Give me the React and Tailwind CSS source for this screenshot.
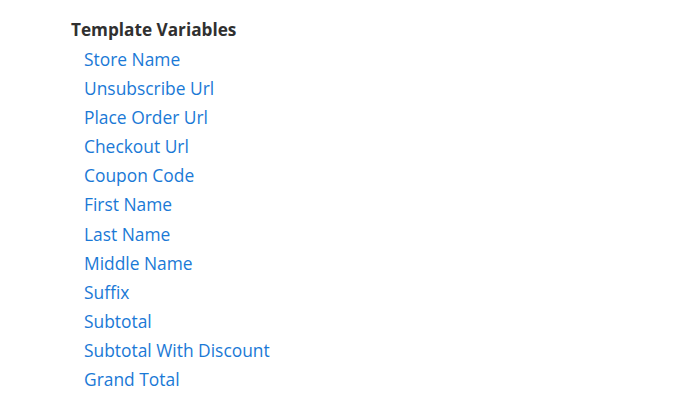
import React from "react";

const variables = [
    "Store Name",
    "Unsubscribe Url",
    "Place Order Url",
    "Checkout Url",
    "Coupon Code",
    "First Name",
    "Last Name",
    "Middle Name",
    "Suffix",
    "Subtotal",
    "Subtotal With Discount",
    "Grand Total",
];

export default function App() {
    return (
        <div className="w-[676px] h-[416px] bg-white pl-[71px] pt-[19px] font-['Open_Sans',sans-serif]">
            <h3 className="text-[17.2px] font-bold text-[#303030] leading-[22px]">Template Variables</h3>

            {/* variable list */}
            <ul className="pl-[13px] mt-[4px]">
                {variables.map((name) => (
                    <li key={name} className="leading-[29.1px] h-[29.1px]">
                        <a href="#" className="text-[17.4px] text-[#1a79d6]">
                            {name}
                        </a>
                    </li>
                ))}
            </ul>
        </div>
    );
}
